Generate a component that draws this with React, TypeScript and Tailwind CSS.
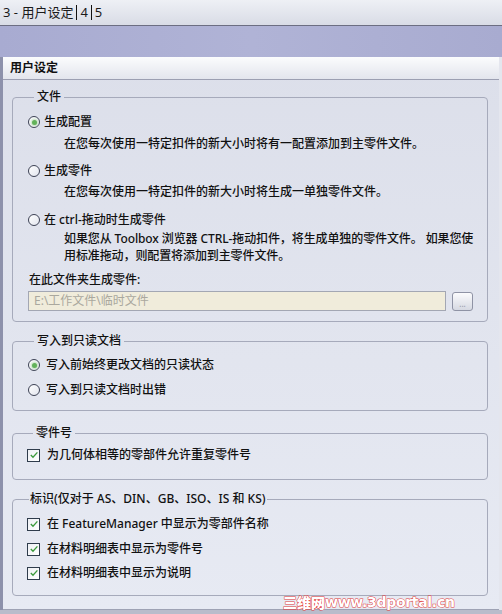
import React from "react";

function Radio({ checked }: { checked?: boolean }) {
  return (
    <span className="flex h-[12px] w-[12px] shrink-0 items-center justify-center rounded-full border border-[#3d4255] bg-gradient-to-br from-[#ffffff] to-[#e2e5ee]">
      {checked && (
        <span className="h-[5px] w-[5px] rounded-full bg-[#62b25a] shadow-[0_0_2px_1px_#c3e4bc]" />
      )}
    </span>
  );
}

function Check() {
  return (
    <span className="flex h-[13px] w-[13px] shrink-0 items-center justify-center border border-[#2f3c4c] bg-gradient-to-br from-[#eef0f4] to-[#ffffff]">
      <svg width="10" height="10" viewBox="0 0 10 10">
        <path d="M1.8 5 L4 7.3 L8.4 2.4" stroke="#3c9a3c" strokeWidth="1.3" fill="none" />
      </svg>
    </span>
  );
}

export default function App() {
  return (
    <div className="relative flex h-[614px] w-[502px] flex-col overflow-hidden bg-[#c9ccd8] font-['Noto_Sans','Noto_Sans_CJK_SC',sans-serif] text-[12px] font-medium text-[#111]">
      {/* tab bar */}
      <div className="flex h-[26px] shrink-0 items-center border-b border-[#6c6e82] bg-gradient-to-b from-[#eef0f5] to-[#d9dce6] pl-[3px] text-[13px] font-normal text-[#1a1a1a]">
        <span>3 - 用户设定</span>
        <span className="mx-[3px] h-[15px] w-px bg-[#111]" />
        <span>4</span>
        <span className="mx-[3px] h-[15px] w-px bg-[#111]" />
        <span>5</span>
      </div>
      {/* band */}
      <div className="h-[31px] shrink-0 bg-gradient-to-r from-[#a8abd1] via-[#b0b3d6] to-[#a8abd0]" />
      {/* panel area */}
      <div className="flex min-h-0 flex-1">
        <div className="w-[3px] shrink-0 bg-[#8d91ab]" />
        <div className="flex w-[496px] shrink-0 flex-col border-b border-[#9ea2b4] bg-gradient-to-b from-[#dcdfea] to-[#e7eaf3]">
          <div className="flex h-[23px] shrink-0 items-center border-b border-[#9c9fb2] bg-gradient-to-b from-[#fbfcfd] to-[#e3e5ed] pl-[7px] text-[12px] font-bold">
            用户设定
          </div>
          <div className="flex flex-col pl-[9px] pr-[11px]">
            {/* 文件 */}
            <fieldset className="mt-[9px] rounded-[4px] border border-[#a6aabb] pb-[10px] pl-[15px] pr-[14px]">
              <legend className="ml-[6px] px-[3px] leading-[16px]">文件</legend>
              <div className="mt-[9px] flex h-[16px] items-center gap-[4px]">
                <Radio checked />
                <span>生成配置</span>
              </div>
              <div className="mt-[5px] pl-[36px] leading-[17px]">
                在您每次使用一特定扣件的新大小时将有一配置添加到主零件文件。
              </div>
              <div className="mt-[11px] flex h-[16px] items-center gap-[4px]">
                <Radio />
                <span>生成零件</span>
              </div>
              <div className="mt-[4px] pl-[36px] leading-[17px]">
                在您每次使用一特定扣件的新大小时将生成一单独零件文件。
              </div>
              <div className="mt-[12px] flex h-[16px] items-center gap-[4px]">
                <Radio />
                <span>在 ctrl-拖动时生成零件</span>
              </div>
              <div className="mt-[2px] whitespace-nowrap pl-[36px] leading-[17px] tracking-[-0.1px]">
                <div>如果您从 Toolbox 浏览器 CTRL-拖动扣件，将生成单独的零件文件。 如果您使</div>
                <div>用标准拖动，则配置将添加到主零件文件。</div>
              </div>
              <div className="mt-[8px] pl-[1px] leading-[16px]">在此文件夹生成零件:</div>
              <div className="mt-[3px] flex items-center gap-[6px]">
                <div className="flex h-[20px] w-[418px] items-center border border-[#a3a7b3] bg-[#f0ecdb] pl-[5px] font-normal text-[#aaa89e]">
                  E:\工作文件\临时文件
                </div>
                <div className="flex h-[19px] w-[21px] items-end justify-center rounded-[3px] border border-[#8f93a5] bg-gradient-to-b from-[#fbfbfd] to-[#d6d9e2] pb-[2px] text-[8px] leading-[8px] text-[#9a9dab]">
                  ...
                </div>
              </div>
            </fieldset>

            {/* 写入到只读文档 */}
            <fieldset className="mt-[11px] rounded-[4px] border border-[#a6aabb] pb-[12px] pl-[15px]">
              <legend className="ml-[6px] px-[3px] leading-[16px]">写入到只读文档</legend>
              <div className="mt-[8px] flex h-[16px] items-center gap-[6px]">
                <Radio checked />
                <span>写入前始终更改文档的只读状态</span>
              </div>
              <div className="mt-[9px] flex h-[16px] items-center gap-[6px]">
                <Radio />
                <span>写入到只读文档时出错</span>
              </div>
            </fieldset>

            {/* 零件号 */}
            <fieldset className="mt-[14px] rounded-[4px] border border-[#a6aabb] pb-[16px] pl-[14px]">
              <legend className="ml-[6px] px-[3px] leading-[16px]">零件号</legend>
              <div className="mt-[6px] flex h-[16px] items-center gap-[7px]">
                <Check />
                <span>为几何体相等的零部件允许重复零件号</span>
              </div>
            </fieldset>

            {/* 标识 */}
            <fieldset className="mt-[11px] rounded-[4px] border border-[#a6aabb] pb-[14px] pl-[14px]">
              <legend className="ml-[2px] px-[1px] leading-[16px]">标识(仅对于 AS、DIN、GB、ISO、IS 和 KS)</legend>
              <div className="mt-[9px] flex h-[16px] items-center gap-[7px]">
                <Check />
                <span>在 FeatureManager 中显示为零部件名称</span>
              </div>
              <div className="mt-[9px] flex h-[16px] items-center gap-[7px]">
                <Check />
                <span>在材料明细表中显示为零件号</span>
              </div>
              <div className="mt-[8px] flex h-[16px] items-center gap-[7px]">
                <Check />
                <span>在材料明细表中显示为说明</span>
              </div>
            </fieldset>
          </div>
        </div>
        <div className="flex-1 bg-[#e4e6ee]" />
      </div>
      <div className="h-[4px] shrink-0 bg-[#b9bccb]" />
      {/* watermark */}
      <div className="absolute bottom-[5px] left-[283px] flex items-center font-['DejaVu_Sans','Noto_Sans_CJK_SC',sans-serif] text-[14px] leading-[14px] font-bold text-white [-webkit-text-stroke:1px_#e23a3a] [paint-order:stroke_fill]">
        <span className="font-['Noto_Sans_CJK_SC',sans-serif] font-black">三维网</span>
        <span className="tracking-[-0.3px]">www.3dportal.cn</span>
      </div>
    </div>
  );
}
